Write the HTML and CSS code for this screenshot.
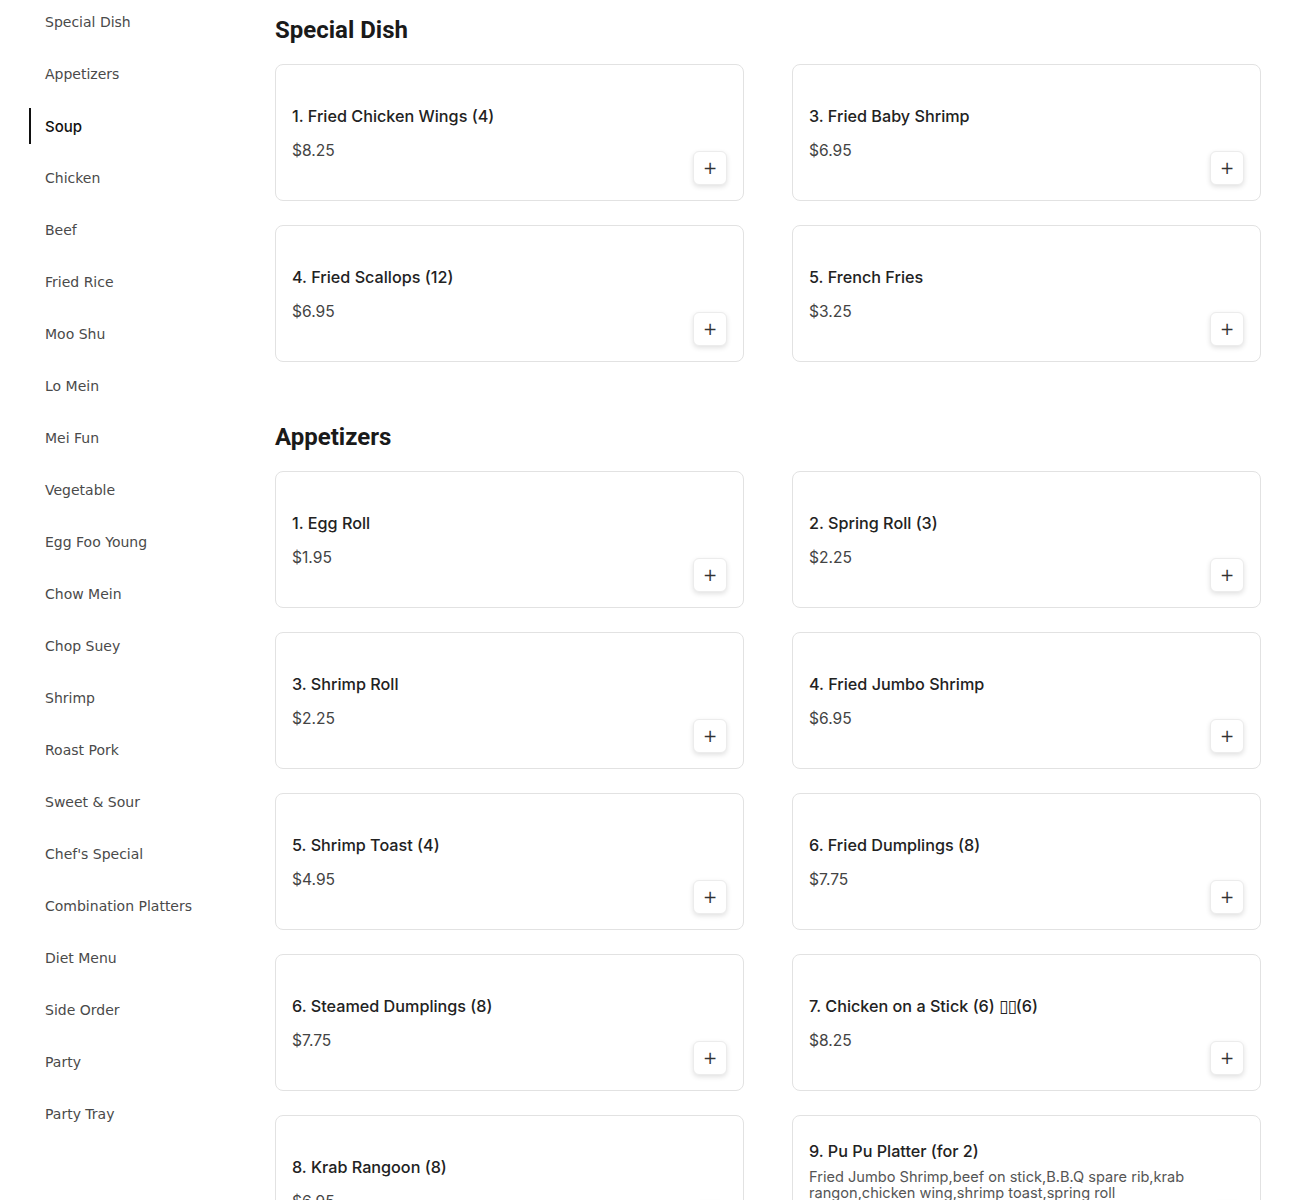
FILE: index.html
```html
<!DOCTYPE html>
<html>
<head>
<meta charset="utf-8">
<link rel="stylesheet" href="styles.css">
</head>
<body>
<div class="page">
  <nav class="sidebar">
    <a class="nav-item">Special Dish</a>
    <a class="nav-item">Appetizers</a>
    <a class="nav-item active">Soup</a>
    <a class="nav-item">Chicken</a>
    <a class="nav-item">Beef</a>
    <a class="nav-item">Fried Rice</a>
    <a class="nav-item">Moo Shu</a>
    <a class="nav-item">Lo Mein</a>
    <a class="nav-item">Mei Fun</a>
    <a class="nav-item">Vegetable</a>
    <a class="nav-item">Egg Foo Young</a>
    <a class="nav-item">Chow Mein</a>
    <a class="nav-item">Chop Suey</a>
    <a class="nav-item">Shrimp</a>
    <a class="nav-item">Roast Pork</a>
    <a class="nav-item">Sweet &amp; Sour</a>
    <a class="nav-item">Chef's Special</a>
    <a class="nav-item">Combination Platters</a>
    <a class="nav-item">Diet Menu</a>
    <a class="nav-item">Side Order</a>
    <a class="nav-item">Party</a>
    <a class="nav-item">Party Tray</a>
  </nav>
  <main class="menu">
    <section class="section">
      <h2 class="section-title">Special Dish</h2>
      <div class="grid">
        <div class="card"><div class="info"><div class="name">1. Fried Chicken Wings (4)</div><div class="price">$8.25</div></div><button class="add">+</button></div>
        <div class="card"><div class="info"><div class="name">3. Fried Baby Shrimp</div><div class="price">$6.95</div></div><button class="add">+</button></div>
        <div class="card"><div class="info"><div class="name">4. Fried Scallops (12)</div><div class="price">$6.95</div></div><button class="add">+</button></div>
        <div class="card"><div class="info"><div class="name">5. French Fries</div><div class="price">$3.25</div></div><button class="add">+</button></div>
      </div>
    </section>
    <section class="section">
      <h2 class="section-title">Appetizers</h2>
      <div class="grid">
        <div class="card"><div class="info"><div class="name">1. Egg Roll</div><div class="price">$1.95</div></div><button class="add">+</button></div>
        <div class="card"><div class="info"><div class="name">2. Spring Roll (3)</div><div class="price">$2.25</div></div><button class="add">+</button></div>
        <div class="card"><div class="info"><div class="name">3. Shrimp Roll</div><div class="price">$2.25</div></div><button class="add">+</button></div>
        <div class="card"><div class="info"><div class="name">4. Fried Jumbo Shrimp</div><div class="price">$6.95</div></div><button class="add">+</button></div>
        <div class="card"><div class="info"><div class="name">5. Shrimp Toast (4)</div><div class="price">$4.95</div></div><button class="add">+</button></div>
        <div class="card"><div class="info"><div class="name">6. Fried Dumplings (8)</div><div class="price">$7.75</div></div><button class="add">+</button></div>
        <div class="card"><div class="info"><div class="name">6. Steamed Dumplings (8)</div><div class="price">$7.75</div></div><button class="add">+</button></div>
        <div class="card"><div class="info"><div class="name">7. Chicken on a Stick (6) <span class="tofu">▯▯</span>(6)</div><div class="price">$8.25</div></div><button class="add">+</button></div>
        <div class="card"><div class="info"><div class="name">8. Krab Rangoon (8)</div><div class="price">$6.95</div></div><button class="add">+</button></div>
        <div class="card"><div class="info"><div class="name">9. Pu Pu Platter (for 2)</div><div class="desc">Fried Jumbo Shrimp,beef on stick,B.B.Q spare rib,krab rangon,chicken wing,shrimp toast,spring roll</div><div class="price">$17.95</div></div><button class="add">+</button></div>
      </div>
    </section>
  </main>
</div>
</body>
</html>
```

FILE: styles.css
```css
html, body {
  margin: 0;
  padding: 0;
  background: #fff;
}

.page {
  display: flex;
  align-items: flex-start;
}

.sidebar {
  flex: none;
  width: 275px;
  box-sizing: border-box;
  padding: 4px 0 0 29px;
  display: flex;
  flex-direction: column;
  gap: 16px;
}

.nav-item {
  display: flex;
  align-items: center;
  height: 36px;
  padding-left: 14px;
  border-left: 2px solid transparent;
  font-family: "DejaVu Sans", sans-serif;
  font-size: 14px;
  color: #4a4a4a;
  text-decoration: none;
}

.nav-item.active {
  border-left-color: #111;
  font-family: Inter, "Open Sans", sans-serif;
  font-weight: 500;
  font-size: 15px;
  color: #111;
}

.menu {
  flex: none;
  width: 986px;
}

.section {
  margin-bottom: 59px;
}

.section-title {
  font-family: Roboto, sans-serif;
  font-weight: 700;
  font-size: 24px;
  line-height: 32px;
  color: #1a1a1a;
  margin: 14px 0 18px;
}

.section + .section .section-title {
  margin-top: 0;
}

.grid {
  display: grid;
  grid-template-columns: 469px 469px;
  column-gap: 48px;
  row-gap: 24px;
}

.card {
  position: relative;
  box-sizing: border-box;
  min-height: 137px;
  border: 1px solid #e2e2e2;
  border-radius: 8px;
  padding: 17px 16px 15px;
  display: flex;
  align-items: center;
  background: #fff;
}

.info {
  display: flex;
  flex-direction: column;
}

.name {
  font-family: Inter, "Open Sans", sans-serif;
  font-weight: 500;
  font-size: 16.2px;
  line-height: 24px;
  color: #222;
}

.tofu {
  font-family: "DejaVu Sans", sans-serif;
  font-weight: 400;
  font-size: 17px;
  letter-spacing: -1px;
}

.desc {
  font-family: Inter, "Open Sans", sans-serif;
  font-size: 14.6px;
  line-height: 16px;
  color: #555;
  margin-top: 6px;
}

.desc + .price {
  margin-top: 6px;
}

.price {
  font-family: Inter, "Open Sans", sans-serif;
  font-size: 15.6px;
  line-height: 24px;
  color: #444;
  margin-top: 11px;
}

.add {
  position: absolute;
  right: 16px;
  bottom: 15px;
  width: 34px;
  height: 34px;
  padding: 0;
  border: 1px solid #ececec;
  border-radius: 6px;
  background: #fff;
  box-shadow: 0 2px 5px rgba(0, 0, 0, 0.12);
  font-family: "DejaVu Sans", sans-serif;
  font-size: 17px;
  line-height: 32px;
  color: #333;
  cursor: pointer;
}
```
